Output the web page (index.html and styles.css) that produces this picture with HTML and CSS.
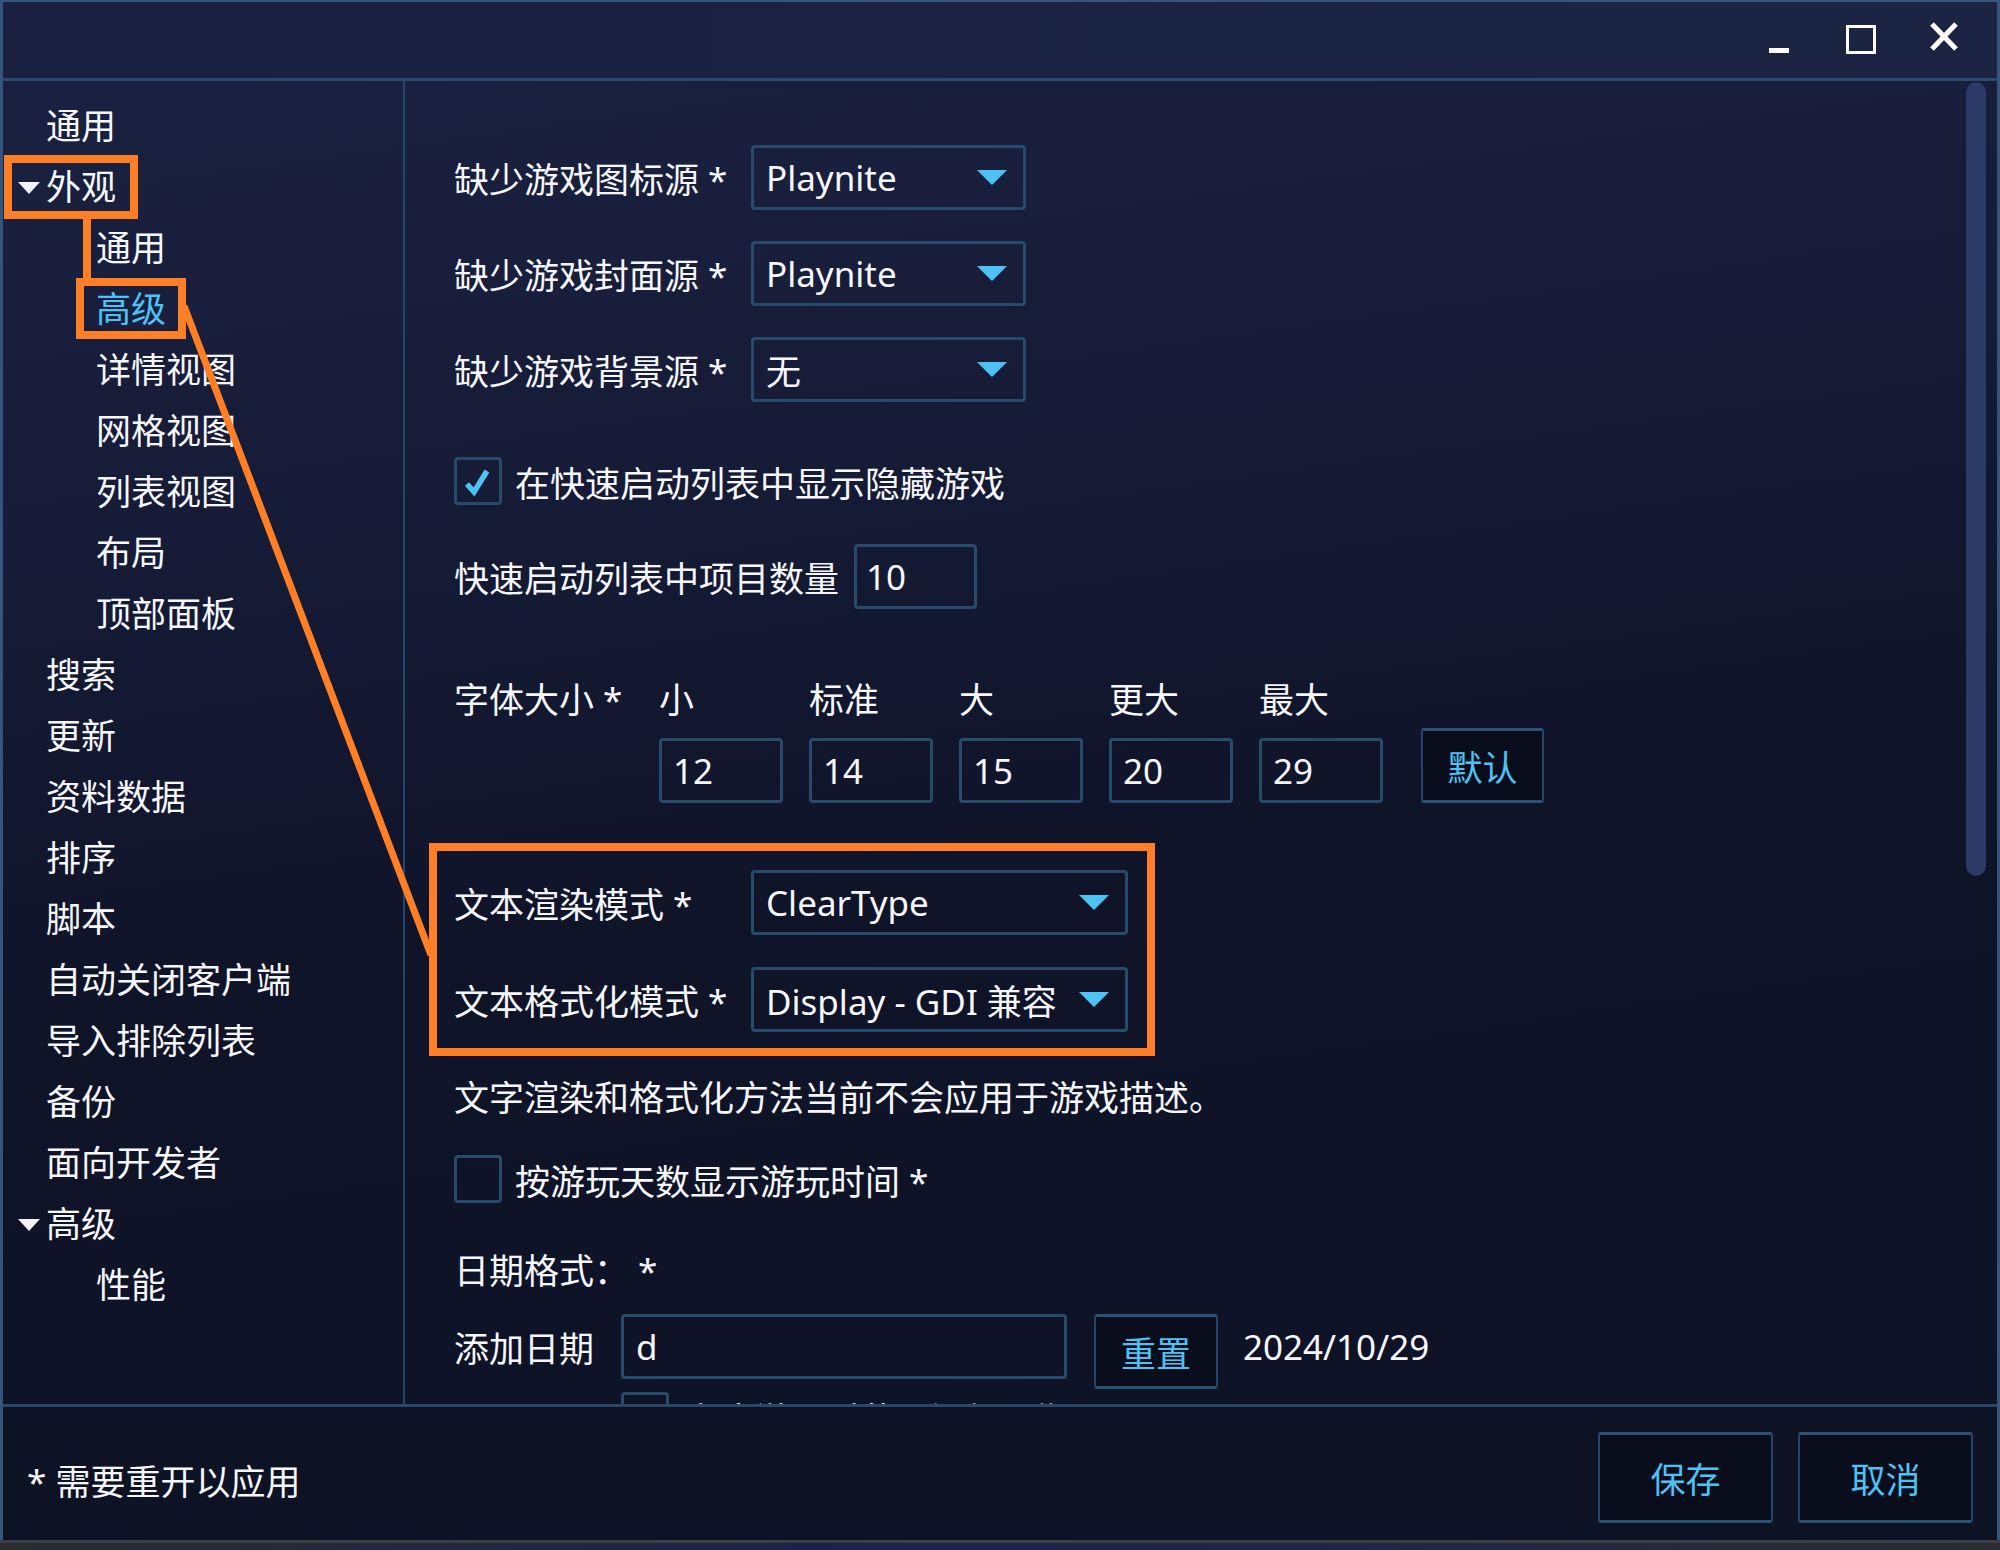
FILE: index.html
```html
<!DOCTYPE html>
<html lang="zh-CN">
<head>
<meta charset="utf-8">
<title>设置</title>
<link rel="stylesheet" href="styles.css">
</head>
<body>
<div class="window">
  <div class="titlebar">
    <svg class="ctl ctl-min" width="20" height="76" viewBox="0 0 20 76"><rect x="0" y="46" width="20" height="5" fill="#fff"/></svg>
    <svg class="ctl ctl-max" width="30" height="76" viewBox="0 0 30 76"><rect x="1.5" y="24.5" width="27" height="26" fill="none" stroke="#fff" stroke-width="3"/></svg>
    <svg class="ctl ctl-close" width="28" height="76" viewBox="0 0 28 76"><path d="M2 22 L26 47 M26 22 L2 47" stroke="#fff" stroke-width="5" fill="none"/></svg>
  </div>
  <div class="main">
    <nav class="sidebar">
      <div class="item">通用</div>
      <div class="item caret-item"><span class="caret"></span>外观</div>
      <div class="item sub">通用</div>
      <div class="item sub active">高级</div>
      <div class="item sub">详情视图</div>
      <div class="item sub">网格视图</div>
      <div class="item sub">列表视图</div>
      <div class="item sub">布局</div>
      <div class="item sub">顶部面板</div>
      <div class="item">搜索</div>
      <div class="item">更新</div>
      <div class="item">资料数据</div>
      <div class="item">排序</div>
      <div class="item">脚本</div>
      <div class="item">自动关闭客户端</div>
      <div class="item">导入排除列表</div>
      <div class="item">备份</div>
      <div class="item">面向开发者</div>
      <div class="item caret-item"><span class="caret"></span>高级</div>
      <div class="item sub">性能</div>
    </nav>
    <div class="content">
      <div class="row r-sel">
        <div class="label-col">缺少游戏图标源 *</div>
        <div class="dropdown"><span>Playnite</span><svg width="30" height="15" viewBox="0 0 30 15"><polygon points="0,0 30,0 15,15" fill="#4dc3f5"/></svg></div>
      </div>
      <div class="row r-sel">
        <div class="label-col">缺少游戏封面源 *</div>
        <div class="dropdown"><span>Playnite</span><svg width="30" height="15" viewBox="0 0 30 15"><polygon points="0,0 30,0 15,15" fill="#4dc3f5"/></svg></div>
      </div>
      <div class="row r-sel">
        <div class="label-col">缺少游戏背景源 *</div>
        <div class="dropdown"><span>无</span><svg width="30" height="15" viewBox="0 0 30 15"><polygon points="0,0 30,0 15,15" fill="#4dc3f5"/></svg></div>
      </div>
      <div class="row r-check1">
        <div class="checkbox"><svg width="42" height="42" viewBox="0 0 42 42"><path d="M10 24 L17 32 L30 11" fill="none" stroke="#4dc3f5" stroke-width="5.5" stroke-linejoin="miter"/></svg></div>
        <div class="check-label">在快速启动列表中显示隐藏游戏</div>
      </div>
      <div class="row r-quick">
        <div>快速启动列表中项目数量</div>
        <div class="textbox quick-box">10</div>
      </div>
      <div class="row r-fonthead">
        <div class="label-col short">字体大小 *</div>
        <div class="fcol">小</div>
        <div class="fcol">标准</div>
        <div class="fcol">大</div>
        <div class="fcol">更大</div>
        <div class="fcol">最大</div>
      </div>
      <div class="row r-fontvals">
        <div class="label-col short"></div>
        <div class="fcol"><div class="textbox fbox">12</div></div>
        <div class="fcol"><div class="textbox fbox">14</div></div>
        <div class="fcol"><div class="textbox fbox">15</div></div>
        <div class="fcol"><div class="textbox fbox">20</div></div>
        <div class="fcol"><div class="textbox fbox">29</div></div>
        <div class="btn btn-default">默认</div>
      </div>
      <div class="row r-render1">
        <div class="label-col">文本渲染模式 *</div>
        <div class="dropdown wide"><span>ClearType</span><svg width="30" height="15" viewBox="0 0 30 15"><polygon points="0,0 30,0 15,15" fill="#4dc3f5"/></svg></div>
      </div>
      <div class="row r-render2">
        <div class="label-col">文本格式化模式 *</div>
        <div class="dropdown wide"><span>Display - GDI 兼容</span><svg width="30" height="15" viewBox="0 0 30 15"><polygon points="0,0 30,0 15,15" fill="#4dc3f5"/></svg></div>
      </div>
      <div class="row r-desc">文字渲染和格式化方法当前不会应用于游戏描述。</div>
      <div class="row r-check2">
        <div class="checkbox"></div>
        <div class="check-label">按游玩天数显示游玩时间 *</div>
      </div>
      <div class="row r-datefmt">日期格式：&nbsp;*</div>
      <div class="row r-added">
        <div class="added-label">添加日期</div>
        <div class="textbox date-box">d</div>
        <div class="btn btn-reset">重置</div>
        <div class="date-preview">2024/10/29</div>
      </div>
      <div class="row r-partial">
        <div class="checkbox small-gap"></div>
        <div class="partial-label">在未游玩时使用添加日期</div>
      </div>
    </div>
    <div class="scrollbar"><div class="thumb"></div></div>
  </div>
  <div class="footer">
    <div class="footnote">* 需要重开以应用</div>
    <div class="footer-buttons">
      <div class="btn btn-footer">保存</div>
      <div class="btn btn-footer">取消</div>
    </div>
  </div>
</div>
<div class="desktop"></div>
<svg class="annotations" width="2000" height="1550" viewBox="0 0 2000 1550">
  <rect x="8" y="159" width="126" height="56" fill="none" stroke="#ff7f26" stroke-width="8"/>
  <rect x="83" y="215" width="8" height="67" fill="#ff7f26"/>
  <rect x="80" y="282" width="102" height="53" fill="none" stroke="#ff7f26" stroke-width="8"/>
  <line x1="184" y1="306" x2="431" y2="955" stroke="#ff7f26" stroke-width="7"/>
  <rect x="433" y="847" width="718" height="205" fill="none" stroke="#ff7f26" stroke-width="8"/>
</svg>
</body>
</html>
```
FILE: styles.css
```css
* { box-sizing: border-box; margin: 0; padding: 0; }
html, body { width: 2000px; height: 1550px; overflow: hidden; }
body {
  position: relative;
  background: #24272d;
  font-family: "Noto Sans", "Noto Sans CJK SC", sans-serif;
  color: #f6f7fa;
  font-size: 35px;
}
.window {
  width: 2000px;
  height: 1540px;
  border: 3px solid #36557a;
  border-top-width: 2px;
  border-bottom: none;
  background: linear-gradient(172deg, #1b2242 0%, #161c37 30%, #0f1429 55%, #0d1225 100%);
  display: flex;
  flex-direction: column;
}
.desktop {
  height: 10px;
  border-top: 3px solid #3c3f46;
  background: linear-gradient(90deg, #2a2c31 0%, #1b2344 40%, #1e2545 65%, #2a2c31 100%);
}
.titlebar {
  height: 79px;
  flex: none;
  border-bottom: 3px solid #2b4a6b;
  background: linear-gradient(90deg, #1a2140, #1c2444);
  display: flex;
  justify-content: flex-end;
  align-items: flex-start;
  padding-right: 39px;
}
.ctl { display: block; flex: none; }
.ctl-max { margin-left: 57px; }
.ctl-close { margin-left: 54px; }
.main {
  height: 1323px;
  flex: none;
  display: flex;
}
.sidebar {
  width: 402px;
  flex: none;
  border-right: 2px solid #27456a;
  padding-top: 14px;
}
.item {
  height: 61px;
  line-height: 61px;
  padding-left: 43px;
  white-space: nowrap;
  display: flex;
  align-items: center;
}
.item.sub { padding-left: 93px; }
.item.active { color: #4dc3f5; }
.item.caret-item { padding-left: 15px; }
.caret {
  width: 0;
  height: 0;
  border-left: 11px solid transparent;
  border-right: 11px solid transparent;
  border-top: 12px solid #f2f3f6;
  margin-right: 6px;
  margin-top: 2px;
}
.content {
  flex: 1;
  padding: 64px 0 0 49px;
  overflow: hidden;
  white-space: nowrap;
}
.row { display: flex; align-items: center; }
.label-col { width: 297px; flex: none; }
.label-col.short { width: 205px; }
.r-sel { height: 65px; margin-bottom: 31px; }
.r-sel:nth-child(3) { margin-bottom: 0; }
.dropdown {
  width: 275px;
  height: 65px;
  border: 3px solid #294b6a;
  border-radius: 4px;
  display: flex;
  align-items: center;
  justify-content: space-between;
  padding: 0 16px 0 12px;
}
.dropdown svg { display: block; flex: none; }
.dropdown.wide { width: 377px; }
.checkbox {
  width: 48px;
  height: 48px;
  border: 3px solid #294b6a;
  border-radius: 4px;
  flex: none;
  display: flex;
  align-items: center;
  justify-content: center;
}
.checkbox svg { display: block; }
.check-label { margin-left: 13px; }
.r-check1 { height: 48px; margin-top: 55px; }
.r-quick { height: 65px; margin-top: 39px; }
.textbox {
  height: 65px;
  border: 3px solid #294b6a;
  border-radius: 4px;
  display: flex;
  align-items: center;
  padding-left: 11px;
  flex: none;
}
.quick-box { width: 123px; margin-left: 15px; padding-left: 9px; }
.r-fonthead { height: 50px; margin-top: 63px; }
.fcol { width: 150px; flex: none; }
.fbox { width: 124px; }
.r-fontvals { height: 75px; margin-top: 6px; align-items: flex-end; }
.btn {
  display: flex;
  align-items: center;
  justify-content: center;
  color: #4dc3f5;
  background: #0a0e1c;
  border: 2px solid #244668;
  border-top: 3px solid #2a5274;
  border-bottom: 3px solid #2a5274;
  border-radius: 3px;
  flex: none;
}
.btn-default { width: 123px; height: 75px; margin-left: 12px; align-self: flex-start; }
.r-render1 { height: 65px; margin-top: 67px; }
.r-render2 { height: 65px; margin-top: 32px; }
.r-desc { height: 50px; margin-top: 38px; }
.r-check2 { height: 48px; margin-top: 35px; }
.r-datefmt { height: 50px; margin-top: 40px; }
.r-added { height: 75px; margin-top: 21px; align-items: flex-start; }
.added-label { height: 65px; display: flex; align-items: center; width: 167px; flex: none; }
.date-box { width: 446px; padding-left: 12px; }
.btn-reset { width: 124px; height: 75px; margin-left: 27px; }
.date-preview { height: 65px; display: flex; align-items: center; margin-left: 25px; }
.r-partial { height: 48px; margin-top: 3px; align-items: flex-start; }
.checkbox.small-gap { margin-left: 167px; }
.partial-label { margin-left: 17px; line-height: 48px; margin-top: 4px; }
.scrollbar {
  width: 31px;
  flex: none;
  padding-top: 1px;
}
.thumb {
  width: 20px;
  height: 794px;
  border-radius: 10px;
  background: #2b3a66;
}
.footer {
  flex: 1;
  border-top: 3px solid #294867;
  background: #0d1225;
  display: flex;
  align-items: center;
  justify-content: space-between;
  padding: 25px 24px 17px 24px;
}
.footnote { padding-top: 4px; }
.footer-buttons { display: flex; gap: 25px; }
.btn-footer { width: 175px; height: 91px; }
.annotations { position: absolute; left: 0; top: 0; pointer-events: none; }
```
